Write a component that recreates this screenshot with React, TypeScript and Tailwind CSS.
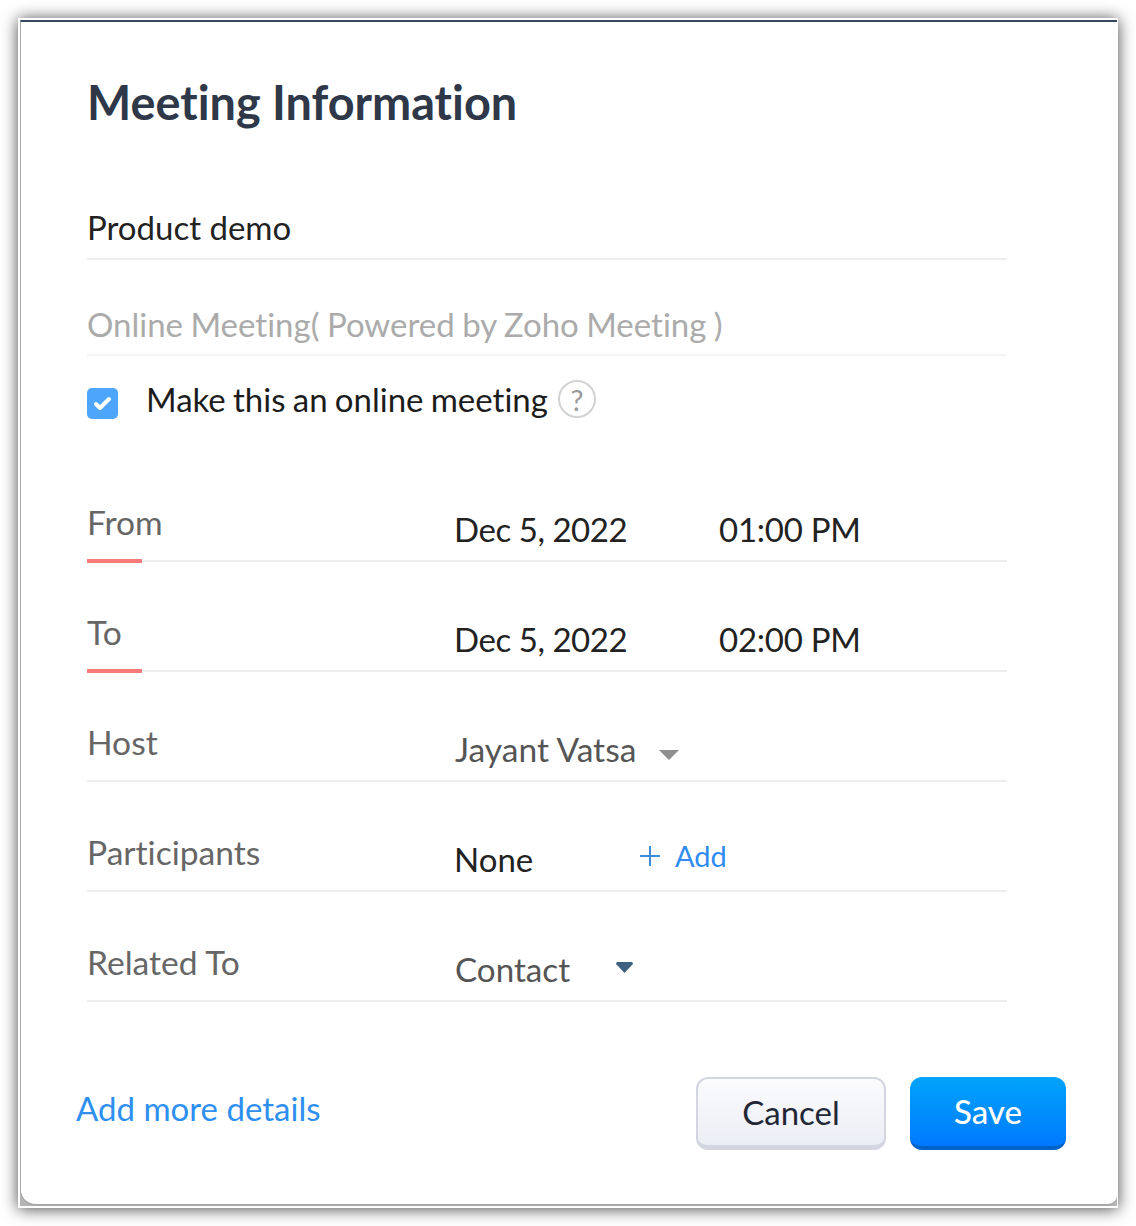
import React from 'react';

const Row = ({ label, accent, children }: { label: string; accent?: boolean; children: React.ReactNode }) => (
  <div className="relative flex h-[110px] items-end border-b-2 border-[#eeeeee] pb-[11px]">
    <div className="mb-[7px] w-[367px] text-[33.6px] leading-[40px] text-[#666666]">{label}</div>
    <div className="flex items-center text-[33px] leading-[40px] text-[#222222]">{children}</div>
    {accent && <div className="absolute bottom-[-3px] left-0 h-[4px] w-[55px] bg-[#f87a7a]" />}
  </div>
);

const DateTime = ({ time }: { time: string }) => (
  <>
    <span className="w-[265px] tracking-[-0.45px]">Dec 5, 2022</span>
    <span className="tracking-[-0.25px]">{time}</span>
  </>
);

export default function App() {
  return (
    <div className="h-[1226px] w-[1136px] bg-white p-[18px] font-['Lato',sans-serif] [font-variant-ligatures:none]">
      <div className="h-[1190px] w-[1100px] bg-white pb-[2px] pl-[2px] pr-px pt-[2px] shadow-[0_1px_15px_rgba(0,0,0,0.72)]">
        <div className="h-full bg-[#b4b4b4]">
          <div className="h-full rounded-bl-[16px] rounded-br-[10px] border-b-2 border-l border-[#a8a8a8] border-t-2 border-t-[#34495e] bg-white pl-[66px] pr-[110px] pt-[48px]">
            <h1 className="text-[46.8px] font-bold leading-[64px] text-[#2e3849]">Meeting Information</h1>

            <div className="mt-[47px] flex h-[79px] items-start border-b-2 border-[#eeeeee] pt-[22px] text-[33px] leading-[48px] text-[#222222]">Product demo</div>
            <div className="flex h-[96px] items-end border-b-2 border-[#f5f5f5] pb-[6px] text-[33px] leading-[48px] text-[#ababab] [word-spacing:-1px]">Online Meeting( Powered by Zoho Meeting )</div>

            <div className="mt-[19px] flex h-[50px] items-center">
              <div className="mt-[6px] flex h-[31px] w-[31px] items-center justify-center rounded-[5px] bg-[#4da6fb]">
                <svg width="19" height="15" viewBox="0 0 19 15" fill="none">
                  <path d="M3 8l4 4L16 3" stroke="white" strokeWidth="4" strokeLinecap="round" strokeLinejoin="round" />
                </svg>
              </div>
              <span className="mb-[2px] ml-[28px] text-[33px] leading-[48px] text-[#1c1c1c] [word-spacing:-1.2px]">Make this an online meeting</span>
              <div className="mb-[2px] ml-[10px] flex h-[38px] w-[38px] items-center justify-center rounded-full border-2 border-[#d2d2d2] text-[29px] leading-none text-[#9a9a9a]">?</div>
            </div>

            <div className="mt-[27px]">
              <Row label="From" accent><DateTime time="01:00 PM" /></Row>
              <Row label="To" accent><DateTime time="02:00 PM" /></Row>
              <Row label="Host">
                <span className="pl-px text-[33.6px] text-[#555555]">Jayant Vatsa</span>
                <svg className="ml-[23px] mt-[12px]" width="20" height="10" viewBox="0 0 20 10"><path d="M0 0h20l-10 10z" fill="#8f8f8f" /></svg>
              </Row>
              <Row label="Participants">
                <span className="mt-[4px] w-[185px]">None</span>
                <span className="mb-[3px] flex items-center text-[#2f8cf0]">
                  <svg width="22" height="22" viewBox="0 0 22 22"><path d="M11 1v20M1 11h20" stroke="#3a8fdc" strokeWidth="2" /></svg>
                  <span className="ml-[14px] text-[29px]">Add</span>
                </span>
              </Row>
              <Row label="Related To">
                <span className="pl-px text-[33.2px] text-[#555555]">Contact</span>
                <svg className="mb-[3px] ml-[46px]" width="17" height="11" viewBox="0 0 17 11"><path d="M1.5 0h14a1.5 1.5 0 0 1 1 2.5L8.5 11 .5 2.5a1.5 1.5 0 0 1 1-2.5z" fill="#3e6180" /></svg>
              </Row>
            </div>

            <div className="-ml-[11px] -mr-[59px] mt-[75px] flex items-start justify-between">
              <a className="-mt-px text-[33px] leading-[64px] text-[#2e8ff0]">Add more details</a>
              <div className="flex gap-[24px]">
                <button className="h-[73px] w-[190px] rounded-[12px] border-2 border-b-[5px] border-[#d3d6e0] bg-gradient-to-b from-[#fbfbfd] to-[#eceef5] text-[33px] leading-none text-[#222736]">Cancel</button>
                <button className="h-[73px] w-[156px] rounded-[12px] border-b-[4px] border-[#0062c8] bg-gradient-to-b from-[#03a4fa] to-[#0078fe] text-[33px] font-medium leading-none text-white">Save</button>
              </div>
            </div>
          </div>
        </div>
      </div>
    </div>
  );
}
